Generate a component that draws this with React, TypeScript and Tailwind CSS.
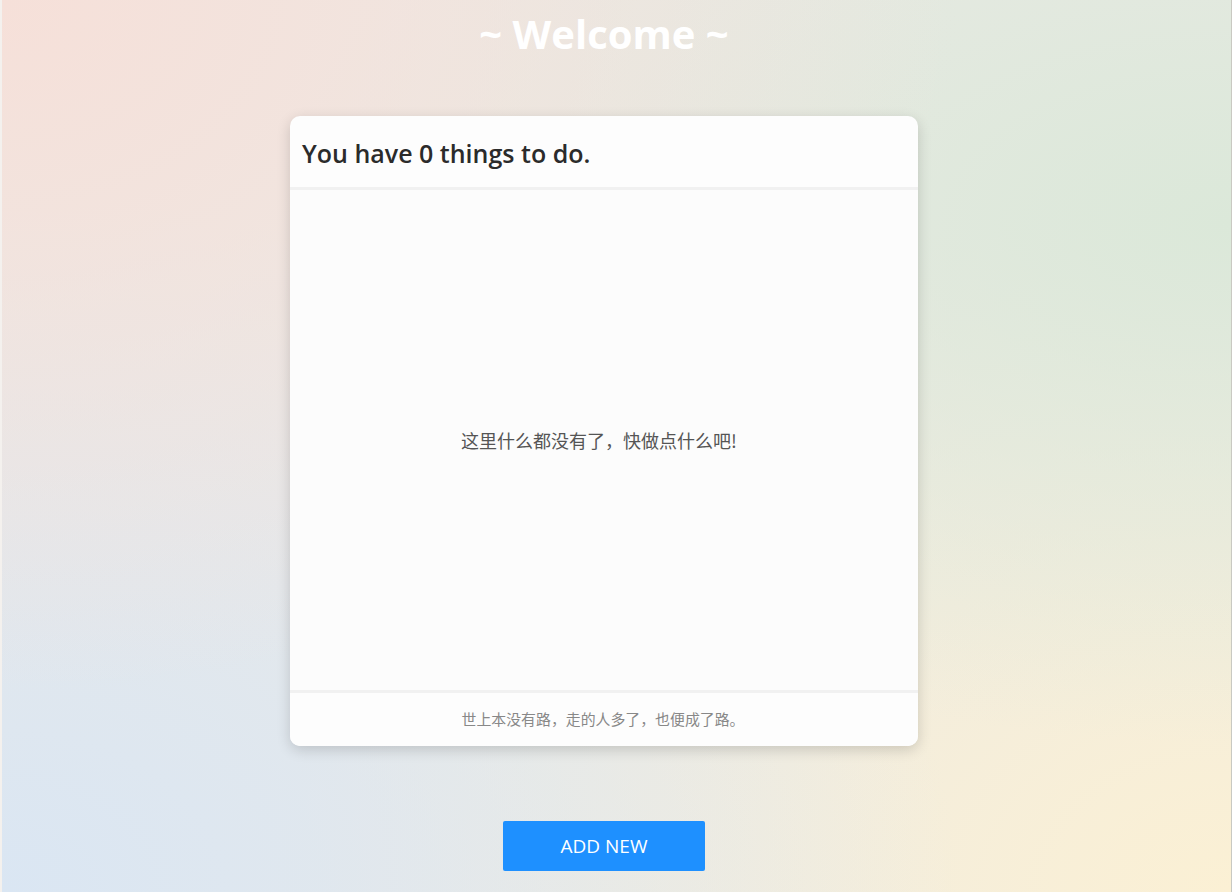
import React from "react";

export default function App() {
  return (
    <div className="min-h-[892px] w-full bg-[#ebeae6] bg-[radial-gradient(ellipse_at_0%_0%,#f6e0d9_0%,rgba(246,224,217,0)_55%),radial-gradient(ellipse_at_100%_25%,#dbe8d9_0%,rgba(219,232,217,0)_55%),radial-gradient(ellipse_at_0%_100%,#dae6f3_0%,rgba(218,230,243,0)_55%),radial-gradient(ellipse_at_100%_100%,#fbf0d4_0%,rgba(251,240,212,0)_55%)] border-l-2 border-l-[#f4f1ee] border-r border-r-[#c9c9c2] font-['Open_Sans','Noto_Sans','Noto_Sans_CJK_SC',sans-serif]">
      <div className="flex flex-col items-center pr-[25px]">
        <h1 className="mt-[6px] h-[56px] text-[40px] leading-[56px] font-bold text-white">
          ~ Welcome ~
        </h1>
        <div className="mt-[54px] flex h-[630px] w-[628px] flex-col overflow-hidden rounded-[10px] bg-[#fdfdfd] shadow-[0_4px_14px_rgba(0,0,0,0.16)]">
          <div className="flex h-[74px] items-center border-b-[3px] border-b-[#f1f1f1] px-3 pt-1">
            <span className="text-[25px] font-semibold text-[#2b2b2b]">
              You have 0 things to do.
            </span>
          </div>
          <div className="flex flex-1 items-center justify-center bg-[#fcfcfc] pr-[10px]">
            <span className="text-[18px] text-[#555] font-['Noto_Sans_CJK_SC',sans-serif]">
              这里什么都没有了，快做点什么吧!
            </span>
          </div>
          <div className="flex h-[56px] items-center justify-center border-t-[3px] border-t-[#f1f1f1] bg-[#fdfdfd] pr-[2px]">
            <span className="text-[14.9px] text-[#888] font-['Noto_Sans_CJK_SC',sans-serif]">
              世上本没有路，走的人多了，也便成了路。
            </span>
          </div>
        </div>
        <button className="mt-[75px] h-[50px] w-[202px] rounded-[2px] bg-[#1e90ff] text-[19px] text-white">
          ADD NEW
        </button>
      </div>
    </div>
  );
}
